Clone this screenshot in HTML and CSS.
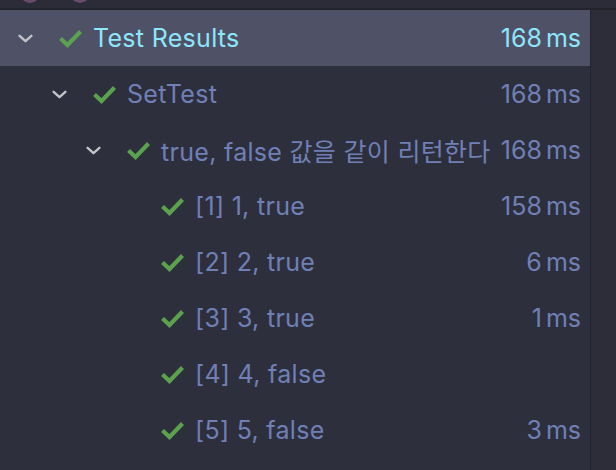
FILE: index.html
```html
<!DOCTYPE html>
<html>
<head>
<meta charset="utf-8">
<link rel="stylesheet" href="styles.css">
</head>
<body>
<div class="topbar">
  <span class="dot"></span>
  <span class="dot"></span>
</div>
<div class="main">
  <div class="tree">
    <div class="row selected lvl0">
      <svg class="chev" viewBox="0 0 14 8"><polyline points="1.5,1.5 7,6.5 12.5,1.5"/></svg>
      <svg class="check" viewBox="0 0 25 19"><polyline points="2.5,9.5 9.5,16 22.5,2.5"/></svg>
      <span class="name">Test Results</span>
      <span class="time">168 ms</span>
    </div>
    <div class="row lvl1">
      <svg class="chev" viewBox="0 0 14 8"><polyline points="1.5,1.5 7,6.5 12.5,1.5"/></svg>
      <svg class="check" viewBox="0 0 25 19"><polyline points="2.5,9.5 9.5,16 22.5,2.5"/></svg>
      <span class="name">SetTest</span>
      <span class="time">168 ms</span>
    </div>
    <div class="row lvl2">
      <svg class="chev" viewBox="0 0 14 8"><polyline points="1.5,1.5 7,6.5 12.5,1.5"/></svg>
      <svg class="check" viewBox="0 0 25 19"><polyline points="2.5,9.5 9.5,16 22.5,2.5"/></svg>
      <span class="name">true, false 값을 같이 리턴한다</span>
      <span class="time">168 ms</span>
    </div>
    <div class="row lvl3">
      <span class="chev-space"></span>
      <svg class="check" viewBox="0 0 25 19"><polyline points="2.5,9.5 9.5,16 22.5,2.5"/></svg>
      <span class="name">[1] 1, true</span>
      <span class="time">158 ms</span>
    </div>
    <div class="row lvl3">
      <span class="chev-space"></span>
      <svg class="check" viewBox="0 0 25 19"><polyline points="2.5,9.5 9.5,16 22.5,2.5"/></svg>
      <span class="name">[2] 2, true</span>
      <span class="time">6 ms</span>
    </div>
    <div class="row lvl3">
      <span class="chev-space"></span>
      <svg class="check" viewBox="0 0 25 19"><polyline points="2.5,9.5 9.5,16 22.5,2.5"/></svg>
      <span class="name">[3] 3, true</span>
      <span class="time">1 ms</span>
    </div>
    <div class="row lvl3">
      <span class="chev-space"></span>
      <svg class="check" viewBox="0 0 25 19"><polyline points="2.5,9.5 9.5,16 22.5,2.5"/></svg>
      <span class="name">[4] 4, false</span>
      <span class="time"></span>
    </div>
    <div class="row lvl3">
      <span class="chev-space"></span>
      <svg class="check" viewBox="0 0 25 19"><polyline points="2.5,9.5 9.5,16 22.5,2.5"/></svg>
      <span class="name">[5] 5, false</span>
      <span class="time">3 ms</span>
    </div>
  </div>
  <div class="divider"></div>
  <div class="side"></div>
</div>
</body>
</html>
```

FILE: styles.css
```css
html, body {
  margin: 0;
  padding: 0;
  background: #2d2f3d;
  height: 100%;
  overflow: hidden;
}
body {
  font-family: Inter, "Noto Sans CJK KR", sans-serif;
  font-size: 25px;
  color: #7080b6;
}
.topbar {
  height: 8px;
  background: #2b2c38;
  border-bottom: 2px solid #22232b;
  display: flex;
  gap: 30px;
  padding-left: 20px;
  overflow: hidden;
}
.dot {
  width: 20px;
  height: 20px;
  border-radius: 50%;
  background: #6a4a6c;
  margin-top: -17px;
  flex: none;
}
.main {
  display: flex;
  height: 460px;
}
.tree {
  width: 590px;
  flex: none;
}
.divider {
  width: 1px;
  background: #23242d;
  flex: none;
}
.side {
  flex: 1;
  background: #2c2d39;
}
.row {
  height: 56px;
  display: flex;
  align-items: center;
  padding-right: 9px;
  box-sizing: border-box;
}
.row.selected {
  background: #4f5266;
  color: #8de6fb;
}
.lvl0 { padding-left: 18px; }
.lvl1 { padding-left: 52px; }
.lvl2 { padding-left: 86px; }
.lvl3 { padding-left: 120px; }
.chev, .chev-space {
  width: 15px;
  height: 9px;
  flex: none;
  margin-right: 25px;
}
.chev polyline {
  fill: none;
  stroke: #c4c4c8;
  stroke-width: 2.2;
  stroke-linecap: round;
  stroke-linejoin: round;
}
.check {
  width: 25px;
  height: 19px;
  flex: none;
  margin-right: 10px;
}
.check polyline {
  fill: none;
  stroke: #5aa24e;
  stroke-width: 4.2;
  stroke-linejoin: miter;
}
.name {
  flex: 1;
  white-space: nowrap;
  letter-spacing: 0.3px;
}
.time {
  white-space: nowrap;
  word-spacing: -3px;
}
```
